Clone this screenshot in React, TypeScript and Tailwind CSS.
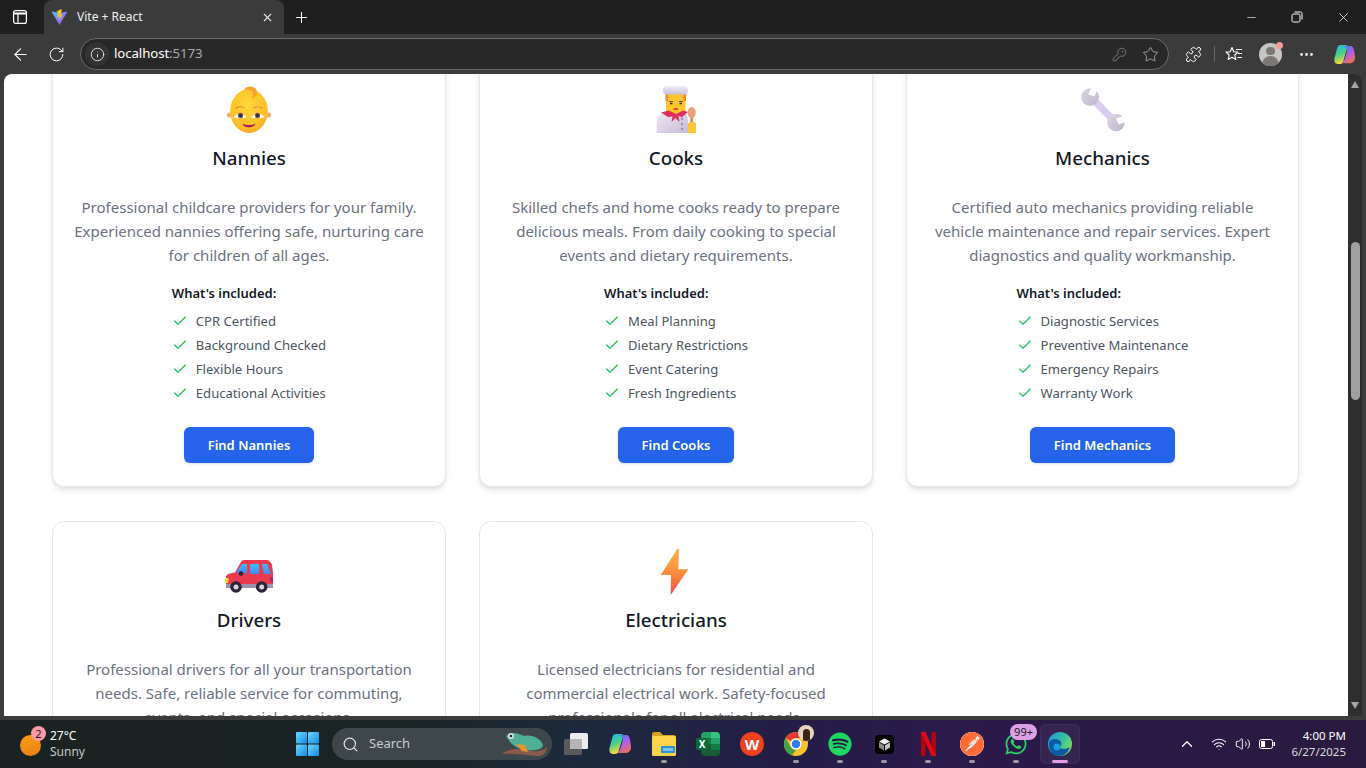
import React from 'react';
import {
  ArrowLeft,
  Check,
  ChevronUp,
  Info,
  KeyRound,
  Minus,
  MoreHorizontal,
  Plus,
  Puzzle,
  RotateCw,
  Search,
  Star,
  Volume2,
  Wifi,
  X,
} from 'lucide-react';
import { FaSpotify, FaWhatsapp } from 'react-icons/fa';
import { SiPostman } from 'react-icons/si';

const uiFont = "font-['Noto_Sans','Open_Sans',sans-serif]";

// emoji: drawn by hand, the system emoji font is not available
const BabyEmoji = () => (
  <svg width="48" height="48" viewBox="0 0 48 48">
    <defs>
      <radialGradient id="babyFace" cx="0.45" cy="0.35" r="0.75">
        <stop offset="0" stopColor="#ffd83a" />
        <stop offset="0.7" stopColor="#fdbe24" />
        <stop offset="1" stopColor="#f79a30" />
      </radialGradient>
    </defs>
    <circle cx="4.5" cy="29" r="2.600" fill="#e9b07a" />
    <circle cx="43.500" cy="29" r="2.600" fill="#e9b07a" />
    <ellipse cx="24" cy="25" rx="18.800" ry="22" fill="url(#babyFace)" />
    <path d="M19 3.500C22 -1 31 -1 32 6C32.500 10 29 13 26.500 12.500C28.500 10 28.500 6 25.500 4.500C23.500 3.500 21 3.500 19 3.500Z" fill="#f8a52f" />
    <path d="M10.500 22.500C13 20.500 17 20.500 19.500 22M28.500 22C31 20.500 35 20.500 37.500 22.500" stroke="#e98a45" strokeWidth="1.3" fill="none" />
    <path d="M8.500 31.500C11 26.500 19.500 26.500 21.500 31.500C17 32.500 12.500 32.500 8.500 31.500Z" fill="#fff" />
    <path d="M26.500 31.500C28.500 26.500 37 26.500 39.500 31.500C35.500 32.500 31 32.500 26.500 31.500Z" fill="#fff" />
    <circle cx="15.500" cy="29.500" r="2.700" fill="#7a5a5e" />
    <circle cx="32.500" cy="29.500" r="2.700" fill="#7a5a5e" />
    <circle cx="15.500" cy="29.500" r="1.300" fill="#1c1420" />
    <circle cx="32.500" cy="29.500" r="1.300" fill="#1c1420" />
    <path d="M17.500 37.500C21 39.500 27 39.500 30.500 37.500C29.500 42.500 18.500 42.500 17.500 37.500Z" fill="#a3195f" />
  </svg>
);

const CookEmoji = () => (
  <svg width="48" height="48" viewBox="0 0 48 48">
    <defs>
      <linearGradient id="cookHat" x1="0" y1="0" x2="0" y2="1">
        <stop offset="0" stopColor="#f2eef7" />
        <stop offset="1" stopColor="#c9bfd8" />
      </linearGradient>
      <linearGradient id="cookCoat" x1="0" y1="0" x2="1" y2="1">
        <stop offset="0" stopColor="#eee8f5" />
        <stop offset="1" stopColor="#c8bcd9" />
      </linearGradient>
    </defs>
    <path d="M4.700 47V36C4.700 29 11 26 16 25H30C33 26 36 29 36 36V47Z" fill="url(#cookCoat)" />
    <rect x="14" y="6" width="19.500" height="22" rx="4" fill="#fdc62d" />
    <rect x="13.500" y="7" width="2.500" height="8" fill="#ee8a2e" />
    <rect x="31.500" y="7" width="2.500" height="8" fill="#ee8a2e" />
    <rect x="11" y="0" width="25" height="8.500" rx="4" fill="url(#cookHat)" />
    <path d="M17 15.500H21M27 15.500H31" stroke="#7a4a2a" strokeWidth="1" />
    <path d="M18 17.500H20.500M27.500 17.500H30" stroke="#3a2a2a" strokeWidth="1.500" />
    <path d="M21.500 23H26" stroke="#d4224e" strokeWidth="1.400" />
    <path d="M9 26.500L17 24.500L24 28L31 24.500L36 26L30 31L26.500 30L27.500 36L23.500 32L19.500 36L20.500 30.500L16 31Z" fill="#dc2f5b" />
    <circle cx="30" cy="32.700" r="1.200" fill="#9c8cb4" />
    <circle cx="30" cy="38" r="1.200" fill="#9c8cb4" />
    <circle cx="30" cy="43" r="1.200" fill="#9c8cb4" />
    <rect x="38.300" y="28" width="2.800" height="10" fill="#d58a5c" />
    <ellipse cx="39.700" cy="26.500" rx="4" ry="5.500" fill="#eb9f7c" />
    <path d="M36 38C36 36 44 35 44 38V47H36Z" fill="#fcc636" />
  </svg>
);

const WrenchEmoji = () => (
  <svg width="48" height="48" viewBox="0 0 48 48">
    <defs>
      <linearGradient id="wrenchHead" x1="0" y1="0" x2="1" y2="1">
        <stop offset="0" stopColor="#dcd6e4" />
        <stop offset="1" stopColor="#bdb4ca" />
      </linearGradient>
    </defs>
    <path d="M12 11L36 36" stroke="#d9ccee" strokeWidth="7" />
    <circle cx="11" cy="11" r="8.800" fill="url(#wrenchHead)" />
    <circle cx="37" cy="36.500" r="8.800" fill="url(#wrenchHead)" />
    <path d="M12.500 9.500L16 0" stroke="#fff" strokeWidth="6.500" />
    <path d="M38.500 35.500L48 32" stroke="#fff" strokeWidth="6.500" />
  </svg>
);

const CarEmoji = () => (
  <svg width="48" height="48" viewBox="0 0 48 48">
    <defs>
      <linearGradient id="carGlass" x1="0" y1="0" x2="0" y2="1">
        <stop offset="0" stopColor="#3cc0fb" />
        <stop offset="1" stopColor="#4a85f0" />
      </linearGradient>
    </defs>
    <path d="M1 36V29C1 27 4 25 10 24.500L16 14C16.500 12.500 18 12 20 12H41C44 12 46 14 47 17L48 25V36Z" fill="#ea3a50" />
    <path d="M11 25L17 16H22V25Z" fill="url(#carGlass)" />
    <path d="M25 16H34V26H25Z" fill="url(#carGlass)" />
    <path d="M37 16H42L46 26H39Z" fill="url(#carGlass)" />
    <circle cx="16" cy="25.500" r="2.300" fill="#2a2236" />
    <rect x="0" y="30" width="3.500" height="5" rx="1" fill="#fcd53f" />
    <rect x="45" y="29" width="3" height="5" rx="1" fill="#ca1a6a" />
    <rect x="1" y="36" width="47" height="4" fill="#a090b0" />
    <circle cx="11" cy="39" r="5.800" fill="#2c2336" />
    <circle cx="11" cy="39" r="2.500" fill="#d9d2e4" />
    <circle cx="36.700" cy="39" r="5.800" fill="#2c2336" />
    <circle cx="36.700" cy="39" r="2.500" fill="#d9d2e4" />
  </svg>
);

const BoltEmoji = () => (
  <svg width="48" height="48" viewBox="0 0 48 48">
    <defs>
      <linearGradient id="boltFill" x1="0" y1="0" x2="0" y2="1">
        <stop offset="0" stopColor="#ffb545" />
        <stop offset="0.55" stopColor="#fb8a3c" />
        <stop offset="1" stopColor="#f4474f" />
      </linearGradient>
    </defs>
    <polygon points="25.300,1 8.700,27 19,27 18.700,47 36.300,21.300 26.300,21.300 27,1" fill="url(#boltFill)" />
  </svg>
);

const ViteLogo = () => (
  <svg width="17" height="17" viewBox="0 0 17 17">
    <defs>
      <linearGradient id="viteA" x1="0" y1="0" x2="1" y2="1">
        <stop offset="0" stopColor="#41d1ff" />
        <stop offset="1" stopColor="#bd34fe" />
      </linearGradient>
    </defs>
    <path d="M0.500 2.500L8.500 16L16.500 2.500L11 3.500H6Z" fill="url(#viteA)" />
    <path d="M9 0.500L5 3L6.800 3.500L6.300 8.500L8.500 7.500L8.300 11.500L11.500 5.500L9.500 6L11 0.500Z" fill="#ffc517" />
  </svg>
);

const CopilotLogo = ({ size = 24 }: { size?: number }) => (
  <svg width={size} height={size} viewBox="0 0 24 24">
    <defs>
      <linearGradient id={`copA${size}`} x1="0" y1="0" x2="0.300" y2="1">
        <stop offset="0" stopColor="#20b8ee" />
        <stop offset="0.55" stopColor="#47d08a" />
        <stop offset="1" stopColor="#f7d83c" />
      </linearGradient>
      <linearGradient id={`copB${size}`} x1="0.200" y1="0" x2="0.700" y2="1">
        <stop offset="0" stopColor="#3f7ff0" />
        <stop offset="0.5" stopColor="#b45ee8" />
        <stop offset="1" stopColor="#f2704f" />
      </linearGradient>
    </defs>
    <path d="M8 2H14C15 2 15 4 14.500 6L11 18C10.500 21 9 22 7 22H5C2 22 1 19 1.500 16L4.500 5C5 3 6 2 8 2Z" fill={`url(#copA${size})`} />
    <path d="M11 3H18C20.500 3 21.500 5 22 8L23 14C23.500 18 21 21 18 21H9C11 20 12 18 12.500 16L14.500 9C15 6 13.500 4 11 3Z" fill={`url(#copB${size})`} />
  </svg>
);

const WindowsLogo = () => (
  <svg width="23" height="24" viewBox="0 0 23 24">
    <defs>
      <linearGradient id="winA" x1="0" y1="0" x2="1" y2="1">
        <stop offset="0" stopColor="#6fd4fb" />
        <stop offset="1" stopColor="#0f8fe8" />
      </linearGradient>
    </defs>
    <rect x="0" y="0" width="11" height="11.500" rx="1" fill="url(#winA)" />
    <rect x="12" y="0" width="11" height="11.500" rx="1" fill="url(#winA)" />
    <rect x="0" y="12.500" width="11" height="11.500" rx="1" fill="url(#winA)" />
    <rect x="12" y="12.500" width="11" height="11.500" rx="1" fill="url(#winA)" />
  </svg>
);

const FrogArt = () => (
  <svg width="46" height="26" viewBox="0 0 46 26">
    <path d="M0 23C8 16 24 18 30 20C36 21 42 19 45 16C45 22 40 26 34 25C24 24 10 22 0 23Z" fill="#8a5a4a" />
    <path d="M4 5C8 0 16 2 22 5C30 3 40 8 41 15C38 20 28 20 22 18C14 18 8 12 4 5Z" fill="#4fae96" />
    <circle cx="9" cy="5" r="3" fill="#d8e4d8" />
    <circle cx="9" cy="5" r="1.300" fill="#1c2430" />
    <path d="M14 13L20 20L26 21L23 14Z" fill="#ef8f33" />
  </svg>
);

const TaskView = () => (
  <svg width="24" height="24" viewBox="0 0 24 24">
    <rect x="0" y="7" width="18" height="16" rx="1.500" fill="#5a5a5e" />
    <rect x="6" y="1" width="18" height="16" rx="1.500" fill="#ececec" />
    <rect x="6" y="7" width="12" height="10" fill="#b5b5b8" />
  </svg>
);

const FolderIcon = () => (
  <svg width="24" height="24" viewBox="0 0 24 24">
    <path d="M0 2C0 1 1 0 2 0H8L11 3H22C23 3 24 4 24 5V8H0Z" fill="#d8a21c" />
    <rect x="0" y="4" width="24" height="20" rx="1.500" fill="#fbd44c" />
    <rect x="9" y="14" width="14" height="7" rx="1" fill="#2d8fd6" />
    <rect x="11" y="16" width="10" height="3" fill="#7cc4ee" />
  </svg>
);

const ExcelIcon = () => (
  <div className="relative w-6 h-6">
    <div className="absolute right-0 top-0 w-[19px] h-6 rounded-sm grid grid-cols-2 grid-rows-4 overflow-hidden">
      <span className="bg-[#21a366]" />
      <span className="bg-[#33c481]" />
      <span className="bg-[#107c41]" />
      <span className="bg-[#21a366]" />
      <span className="bg-[#185c37]" />
      <span className="bg-[#107c41]" />
      <span className="bg-[#185c37]" />
      <span className="bg-[#185c37]" />
    </div>
    <div className="absolute left-0 top-[6px] w-3 h-3 rounded-[2px] bg-[#0d6a38] flex items-center justify-center text-white text-[10px] leading-none font-bold">
      X
    </div>
  </div>
);

const WpsIcon = () => (
  <div className="w-6 h-6 rounded-full bg-[#f0401e] flex items-center justify-center text-white text-[15px] leading-none font-bold">
    W
  </div>
);

const ChromeIcon = () => (
  <svg width="24" height="24" viewBox="0 0 24 24">
    <circle cx="12" cy="12" r="12" fill="#fbc02d" />
    <path d="M12 0A12 12 0 0 1 22.400 6H12A6 6 0 0 0 6.800 9L1.600 6A12 12 0 0 1 12 0Z" fill="#e53935" />
    <path d="M1.600 6L6.800 15A6 6 0 0 0 12 18L8 23.300A12 12 0 0 1 1.600 6Z" fill="#43a047" />
    <circle cx="12" cy="12" r="5.500" fill="#fff" />
    <circle cx="12" cy="12" r="4.300" fill="#2f7ff0" />
  </svg>
);

const CubeIcon = () => (
  <div className="w-[19px] h-[19px] rounded-[4px] bg-black flex items-center justify-center">
    <svg width="13" height="13" viewBox="0 0 13 13">
      <path d="M6.500 0.500L12 3.500L6.500 6.500L1 3.500Z" fill="#f2f2f2" />
      <path d="M1 4.500L6 7.300V12.500L1 9.500Z" fill="#8c8c8c" />
      <path d="M12 4.500L7 7.300V12.500L12 9.500Z" fill="#c4c4c4" />
    </svg>
  </div>
);

const NetflixIcon = () => (
  <svg width="15" height="24" viewBox="0 0 15 24">
    <rect x="0" y="0" width="4.500" height="24" fill="#b1060f" />
    <rect x="10.500" y="0" width="4.500" height="24" fill="#b1060f" />
    <path d="M0 0H4.500L15 24H10.500Z" fill="#e50914" />
  </svg>
);

const EdgeIcon = () => (
  <svg width="24" height="24" viewBox="0 0 24 24">
    <defs>
      <linearGradient id="edgeA" x1="0" y1="0" x2="1" y2="0.600">
        <stop offset="0" stopColor="#1d9ad8" />
        <stop offset="0.6" stopColor="#35c1a1" />
        <stop offset="1" stopColor="#7ddb5c" />
      </linearGradient>
    </defs>
    <circle cx="12" cy="12" r="12" fill="url(#edgeA)" />
    <path d="M1 10C4 6 11 6 13 10C14 12 13 14 11 15C14 18 19 17 22 15C20 21 16 24 11 24C5 24 0 18 1 10Z" fill="#0c59a4" />
    <circle cx="9" cy="15" r="3.500" fill="#1b9de2" />
  </svg>
);

const TaskbarIcon = ({
  children,
  dot,
  active,
}: {
  children: React.ReactNode;
  dot?: boolean;
  active?: boolean;
}) => (
  <div className="relative w-11 h-10 flex items-center justify-center">
    {active && <div className="absolute inset-x-[2px] inset-y-0 rounded-md bg-white/5 border border-white/5" />}
    <div className="relative flex items-center justify-center">{children}</div>
    {dot && <span className="absolute bottom-[1px] left-1/2 -ml-[3px] w-[6px] h-[3px] rounded-full bg-[#9a9aa2]" />}
    {active && <span className="absolute bottom-[1px] left-1/2 -ml-2 w-4 h-[3px] rounded-full bg-[#e59ce8]" />}
  </div>
);

const TabStrip = () => (
  <div className="h-[34px] shrink-0 bg-[#1f1f1f] flex items-stretch text-white">
    <div className="w-[40px] mr-1 flex items-center justify-center">
      <svg width="14" height="14" viewBox="0 0 14 14" fill="none" stroke="#fff" strokeWidth="1.200">
        <rect x="0.600" y="0.600" width="12.800" height="12.800" rx="2" />
        <path d="M0.600 3.500H13.400" strokeWidth="2" />
        <path d="M5 3.500V13.400" />
      </svg>
    </div>
    <div className="w-[240px] bg-[#3b3b3b] rounded-t-lg flex items-center pl-[7px] pr-[10px]">
      <ViteLogo />
      <span className="ml-[9px] text-xs text-[#f0f0f0]">Vite + React</span>
      <X size={13} strokeWidth={2} className="ml-auto text-[#e4e4e4]" />
    </div>
    <div className="w-[34px] flex items-center justify-center">
      <Plus size={17} strokeWidth={1.5} />
    </div>
    <div className="ml-auto flex items-center">
      <div className="w-[46px] flex justify-center">
        <Minus size={13} strokeWidth={1.2} />
      </div>
      <div className="w-[46px] flex justify-center">
        <svg width="12" height="12" viewBox="0 0 12 12" fill="none" stroke="#fff" strokeWidth="1">
          <rect x="1" y="3" width="8" height="8" rx="1.500" />
          <path d="M3.500 1H9.500C10.500 1 11 1.500 11 2.500V8.500" />
        </svg>
      </div>
      <div className="w-[46px] flex justify-center">
        <X size={15} strokeWidth={1.2} />
      </div>
    </div>
  </div>
);

const Toolbar = () => (
  <div className="h-[40px] shrink-0 flex items-center text-white">
    <div className="w-[40px] flex justify-center">
      <ArrowLeft size={19} strokeWidth={1.4} />
    </div>
    <div className="w-[32px] flex justify-center">
      <RotateCw size={17} strokeWidth={1.4} />
    </div>
    <div className="ml-2 w-[1089px] h-[32px] rounded-full border border-[#6b6b6b] bg-[#282828] flex items-center pl-[4px]">
      <div className="w-[24px] h-[24px] rounded-full bg-[#333] flex items-center justify-center">
        <Info size={15} strokeWidth={1.5} className="text-[#e4e4e4]" />
      </div>
      <span className="ml-[5px] text-[13.25px] tracking-[-0.1px]">
        localhost<span className="text-[#a8a8a8]">:5173</span>
      </span>
      <KeyRound size={15} strokeWidth={1.3} className="ml-auto mr-[15px] text-[#8a8a8a]" />
      <Star size={17} strokeWidth={1.3} className="mr-[9px] text-[#a8a8a8]" />
    </div>
    <div className="ml-[3px] w-[42px] flex justify-center">
      <Puzzle size={17} strokeWidth={1.4} />
    </div>
    <div className="w-px h-[16px] bg-[#666]" />
    <div className="w-[38px] flex justify-center">
      <svg width="18" height="17" viewBox="0 0 18 17" fill="none" stroke="#fff" strokeWidth="1.100">
        <path d="M7 1.500L8.800 5.800L13 6.100L9.800 9L10.800 13.500L7 11.200L3.200 13.500L4.200 9L1 6.100L5.200 5.800Z" strokeLinejoin="round" />
        <path d="M11 3.500H17M13 7.500H17M12.500 11.500H17" />
      </svg>
    </div>
    <div className="relative w-[34px] flex justify-center">
      <div className="w-[23px] h-[23px] rounded-full bg-[#c9c5c2] overflow-hidden flex flex-col items-center">
        <span className="mt-[4px] w-[9px] h-[9px] rounded-full bg-[#7b7976]" />
        <span className="mt-[1px] w-[17px] h-[10px] rounded-t-full bg-[#7b7976]" />
      </div>
      <span className="absolute -top-[1px] right-[4px] w-[7px] h-[7px] rounded-full bg-[#f59a9a]" />
    </div>
    <div className="w-[38px] flex justify-center">
      <MoreHorizontal size={17} strokeWidth={2} />
    </div>
    <div className="w-[38px] flex justify-center">
      <CopilotLogo size={23} />
    </div>
  </div>
);

type Service = {
  title: string;
  icon: React.ReactNode;
  description: string[];
  features: string[];
  button: string;
};

const services: Service[] = [
  {
    title: 'Nannies',
    icon: <BabyEmoji />,
    description: [
      'Professional childcare providers for your family.',
      'Experienced nannies offering safe, nurturing care',
      'for children of all ages.',
    ],
    features: ['CPR Certified', 'Background Checked', 'Flexible Hours', 'Educational Activities'],
    button: 'Find Nannies',
  },
  {
    title: 'Cooks',
    icon: <CookEmoji />,
    description: [
      'Skilled chefs and home cooks ready to prepare',
      'delicious meals. From daily cooking to special',
      'events and dietary requirements.',
    ],
    features: ['Meal Planning', 'Dietary Restrictions', 'Event Catering', 'Fresh Ingredients'],
    button: 'Find Cooks',
  },
  {
    title: 'Mechanics',
    icon: <WrenchEmoji />,
    description: [
      'Certified auto mechanics providing reliable',
      'vehicle maintenance and repair services. Expert',
      'diagnostics and quality workmanship.',
    ],
    features: ['Diagnostic Services', 'Preventive Maintenance', 'Emergency Repairs', 'Warranty Work'],
    button: 'Find Mechanics',
  },
  {
    title: 'Drivers',
    icon: <CarEmoji />,
    description: [
      'Professional drivers for all your transportation',
      'needs. Safe, reliable service for commuting,',
      'events, and special occasions.',
    ],
    features: ['Licensed Drivers', 'Airport Transfers', 'Daily Commute', 'Long Distance'],
    button: 'Find Drivers',
  },
  {
    title: 'Electricians',
    icon: <BoltEmoji />,
    description: [
      'Licensed electricians for residential and',
      'commercial electrical work. Safety-focused',
      'professionals for all electrical needs.',
    ],
    features: ['Wiring Installation', 'Panel Upgrades', 'Safety Inspections', 'Emergency Repairs'],
    button: 'Find Electricians',
  },
];

const ServiceCard = ({ service, raised }: { service: Service; raised: boolean }) => (
  <div
    className={`bg-white rounded-xl border border-[#e5e7eb] px-6 pt-[26px] pb-[23px] flex flex-col items-center ${
      raised ? 'shadow-md' : ''
    }`}
  >
    <div className="h-12 w-12 mb-[10px]">{service.icon}</div>
    <h3 className="text-[18.75px] leading-7 font-medium text-[#111827]">{service.title}</h3>
    <p className="mt-[23px] text-center text-[15px] leading-6 text-[#6b7280] whitespace-nowrap">
      {service.description.map((line) => (
        <span key={line} className="block">
          {line}
        </span>
      ))}
    </p>
    <div className="mt-[14px] w-fit">
      <h4 className="text-[13px] leading-6 font-semibold text-[#111827]">What's included:</h4>
      <ul className="mt-1">
        {service.features.map((feature) => (
          <li key={feature} className="flex items-center h-6 text-[13.1px] text-[#4b5563]">
            <Check size={16} strokeWidth={2} className="mr-2 text-[#22c55e]" />
            <span className="pt-px">{feature}</span>
          </li>
        ))}
      </ul>
    </div>
    <button className="mt-[22px] h-9 pt-px px-6 rounded-md bg-[#2563eb] text-white text-[13px] font-semibold shadow-sm">
      {service.button}
    </button>
  </div>
);

const Scrollbar = () => (
  <div className="w-[14px] shrink-0 bg-[#2e2e2e] rounded-tr-lg flex flex-col items-center">
    <div className="mt-[7px] w-0 h-0 border-x-[4.5px] border-x-transparent border-b-[7px] border-b-[#a6a6a6]" />
    <div className="mt-[154px] w-[9px] h-[158px] rounded-full bg-[#9f9f9f]" />
    <div className="mt-auto mb-[7px] w-0 h-0 border-x-[4.5px] border-x-transparent border-t-[7px] border-t-[#a6a6a6]" />
  </div>
);

const Taskbar = () => (
  <div className="h-12 shrink-0 flex items-center text-white bg-[linear-gradient(90deg,#1a2321_0%,#1b2425_30%,#1c2a3c_42%,#241d47_58%,#2b1a4a_70%,#2a1a3e_100%)]">
    {/* weather */}
    <div className="w-[288px] pl-[20px] flex items-center">
      <div className="relative w-[30px] h-[30px]">
        <div className="absolute left-0 top-[6px] w-[21px] h-[21px] rounded-full bg-[linear-gradient(160deg,#f7a21b,#ef7a12)]" />
        <span className="absolute left-[11px] -top-[3px] w-[15px] h-[15px] rounded-full bg-[#f99ba6] text-[#1a1a1a] text-[11px] leading-[15px] text-center">
          2
        </span>
      </div>
      <div className="text-xs leading-4">
        <div>27°C</div>
        <div className="text-[#c4c8c8]">Sunny</div>
      </div>
    </div>

    <div className="w-[44px] flex items-center justify-start pl-2">
      <WindowsLogo />
    </div>

    <div className="w-[220px] h-8 rounded-full bg-[#3e484c] flex items-center pl-[10px] pr-[4px]">
      <Search size={17} strokeWidth={1.6} className="text-[#e8e8e8]" />
      <span className="ml-[10px] text-[13px] text-[#c8cccc]">Search</span>
      <div className="ml-auto">
        <FrogArt />
      </div>
    </div>

    <div className="ml-[2px] flex items-center">
      <TaskbarIcon>
        <TaskView />
      </TaskbarIcon>
      <TaskbarIcon>
        <CopilotLogo />
      </TaskbarIcon>
      <TaskbarIcon dot>
        <FolderIcon />
      </TaskbarIcon>
      <TaskbarIcon>
        <ExcelIcon />
      </TaskbarIcon>
      <TaskbarIcon>
        <WpsIcon />
      </TaskbarIcon>
      <TaskbarIcon dot>
        <ChromeIcon />
        <span className="absolute -right-[6px] -top-[7px] w-[16px] h-[16px] rounded-full bg-[#e7d3bf] flex items-end justify-center overflow-hidden">
          <span className="w-[7px] h-[12px] rounded-t-full bg-[#3a2418]" />
        </span>
      </TaskbarIcon>
      <TaskbarIcon dot>
        <FaSpotify size={24} color="#1ed760" />
      </TaskbarIcon>
      <TaskbarIcon dot>
        <CubeIcon />
      </TaskbarIcon>
      <TaskbarIcon dot>
        <NetflixIcon />
      </TaskbarIcon>
      <TaskbarIcon dot>
        <div className="w-6 h-6 rounded-full bg-[#ff6c37] flex items-center justify-center">
          <SiPostman size={24} color="#ff6c37" className="bg-white rounded-full" />
        </div>
      </TaskbarIcon>
      <TaskbarIcon dot>
        <FaWhatsapp size={24} color="#25d366" />
        <span className="absolute -top-[8px] -right-[9px] h-4 px-[4px] rounded-full bg-[#dca0e6] text-[#1a1a1a] text-[11px] leading-4">
          99+
        </span>
      </TaskbarIcon>
      <TaskbarIcon active>
        <EdgeIcon />
      </TaskbarIcon>
    </div>

    <div className="ml-auto flex items-center pr-[20px]">
      <ChevronUp size={18} strokeWidth={1.6} className="mr-[15px]" />
      <Wifi size={16} strokeWidth={1.6} className="mr-[8px]" />
      <Volume2 size={16} strokeWidth={1.4} className="mr-[8px]" />
      <svg width="16" height="10" viewBox="0 0 16 10" fill="none" className="mr-[16px]">
        <rect x="0.500" y="0.500" width="13" height="9" rx="2" stroke="#fff" />
        <rect x="2" y="2" width="4" height="6" fill="#fff" />
        <rect x="14.500" y="3" width="1.500" height="4" fill="#fff" />
      </svg>
      <div className="text-[11.5px] leading-4 text-right">
        <div>4:00 PM</div>
        <div className="text-[#dcdcdc]">6/27/2025</div>
      </div>
    </div>
  </div>
);

const App: React.FC = () => {
  return (
    <div className={`w-[1366px] h-[768px] overflow-hidden flex flex-col bg-[#3b3b3b] ${uiFont}`}>
      <TabStrip />
      <Toolbar />
      <div className="flex-1 min-h-0 flex px-1 pb-1">
        <main className="flex-1 min-w-0 bg-white rounded-tl-lg overflow-hidden">
          {/* page is scrolled: first row is cut off by the toolbar */}
          <div className="-mt-[15px] ml-[48px] grid grid-cols-[394px_394px_393px] gap-x-[33px] gap-y-[34px]">
            {services.map((service, i) => (
              <ServiceCard key={service.title} service={service} raised={i < 3} />
            ))}
          </div>
        </main>
        <Scrollbar />
      </div>
      <Taskbar />
    </div>
  );
};

export default App;
